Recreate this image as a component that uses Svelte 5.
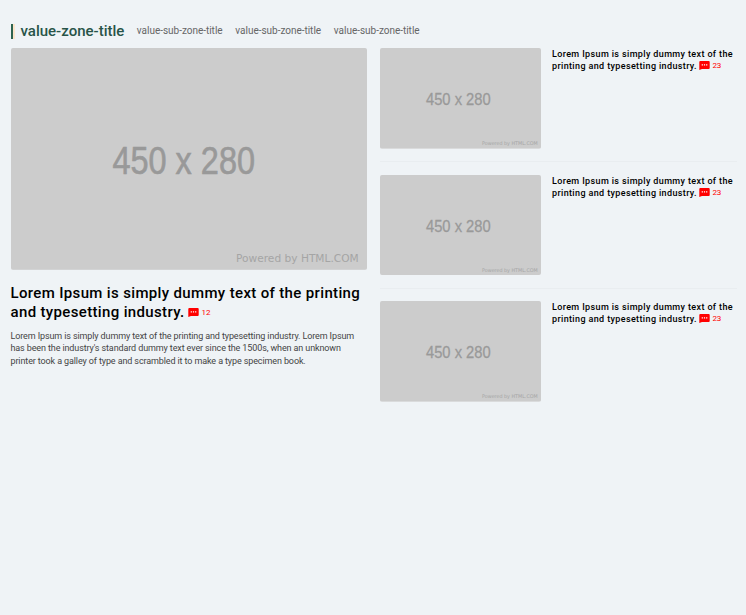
<script>
  const subzones = ['value-sub-zone-title', 'value-sub-zone-title', 'value-sub-zone-title'];
  const stories = [23, 23, 23];
</script>

{#snippet placeholder()}
  <svg class="picture" viewBox="0 0 450 280" role="img" aria-label="450 x 280">
    <rect width="450" height="280" fill="#ccc" />
    <text class="dimensions" x="128" y="159" textLength="180" lengthAdjust="spacingAndGlyphs">450 x 280</text>
    <text class="powered" x="284" y="270" textLength="155" lengthAdjust="spacingAndGlyphs">Powered by HTML.COM</text>
  </svg>
{/snippet}

{#snippet comments(count)}
  <span class="comments">
    <svg viewBox="0 0 11 9" aria-hidden="true">
      <path d="M1.3 0h8.4a1 1 0 0 1 1 1v6a1 1 0 0 1-1 1H3L.3 9V1a1 1 0 0 1 1-1z" fill="red" />
      <path d="M2.7 3.2h1.2v1.2H2.7zm2.2 0h1.2v1.2H4.9zm2.2 0h1.2v1.2H7.1z" fill="#fff" />
    </svg><span>{count}</span>
  </span>
{/snippet}

<section class="zone">
  <header>
    <h2>value-zone-title</h2>
    {#each subzones as label}
      <span class="sub">{label}</span>
    {/each}
  </header>
  <div class="columns">
    <article class="lead">
      {@render placeholder()}
      <h1>Lorem Ipsum is simply dummy text of the printing<br />and typesetting industry. {@render comments(12)}</h1>
      <p>Lorem Ipsum is simply dummy text of the printing and typesetting industry. Lorem Ipsum<br />has been the industry's standard dummy text ever since the 1500s, when an unknown<br />printer took a galley of type and scrambled it to make a type specimen book.</p>
    </article>
    <div class="list">
      {#each stories as count}
        <article class="story">
          <div class="thumb">{@render placeholder()}</div>
          <h3>Lorem Ipsum is simply dummy text of the<br />printing and typesetting industry. {@render comments(count)}</h3>
        </article>
      {/each}
    </div>
  </div>
</section>

<style>
  :global(body) {
    background: #eff3f6;
  }
  .zone {
    box-sizing: border-box;
    min-height: 615px;
    padding: 24px 9px 0 10.5px;
    font-family: Roboto, 'Liberation Sans', sans-serif;
    white-space: nowrap;
  }
  h1, h2, h3, p {
    margin: 0;
    font-weight: 500;
  }
  header {
    display: flex;
    height: 24px;
    align-items: flex-start;
  }
  h2 {
    height: 15px;
    margin-right: 12.5px;
    padding-left: 8px;
    border-left: 2px solid #2d6350;
    box-shadow: inset 2px 0 #fae5ca;
    color: #285448;
    font-size: 15px;
    line-height: 15px;
  }
  .sub {
    width: 86px;
    margin-right: 12.5px;
    color: #666;
    font-size: 10px;
    line-height: 13px;
    letter-spacing: -0.02px;
  }
  .columns {
    display: flex;
    gap: 12.5px;
  }
  .lead {
    flex: none;
    width: 356.5px;
  }
  .picture {
    display: block;
    width: 100%;
    border-radius: 2px;
  }
  .dimensions {
    fill: #999;
    stroke: #999;
    stroke-width: 0.8px;
    font: 48px 'Liberation Sans', sans-serif;
  }
  .powered {
    fill: #a5a5a5;
    font: 14px 'DejaVu Sans', sans-serif;
  }
  h1 {
    margin-top: 14px;
    font-size: 15px;
    line-height: 19px;
    letter-spacing: 0.35px;
  }
  p {
    margin-top: 8px;
    color: #444;
    font-size: 9px;
    font-weight: 400;
    line-height: 12.5px;
    letter-spacing: -0.115px;
  }
  .list {
    flex: 1;
  }
  .story {
    display: flex;
    gap: 10.8px;
    height: 113px;
    margin-bottom: 12.5px;
    border-bottom: 1px solid #e9edf0;
  }
  .story:last-child {
    border-color: transparent;
  }
  .thumb {
    flex: none;
    width: 161.7px;
  }
  h3 {
    font-size: 9px;
    line-height: 12px;
    letter-spacing: 0.37px;
  }
  .comments {
    display: inline-flex;
    align-items: center;
    gap: 3px;
    margin-left: -1px;
    color: red;
    font-size: 8px;
    font-weight: 400;
    line-height: 9px;
    letter-spacing: 0;
  }
  .comments svg {
    width: 11px;
    height: 9px;
  }
  h3 .comments {
    position: relative;
    top: 1px;
    margin-left: 0;
    left: -1px;
    letter-spacing: -0.3px;
  }
</style>
